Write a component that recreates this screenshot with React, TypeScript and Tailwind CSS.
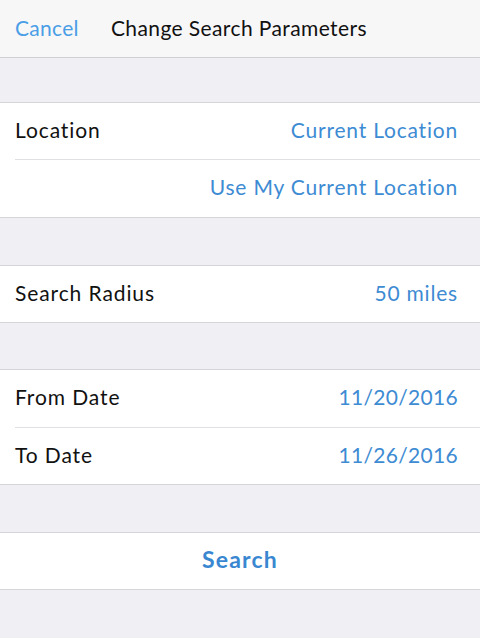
import React from 'react';

const font = { fontFamily: 'Lato, "Open Sans", sans-serif' };

interface RowProps {
  label?: string;
  value: string;
  h?: string;
  numeric?: boolean;
}

const Row = ({ label, value, h = 'h-[56px]', numeric }: RowProps) => (
  <div className={`flex items-center justify-between pl-[15px] pr-[22px] pb-[3px] ${h}`}>
    <span className="text-[21px] tracking-[0.9px] text-[#111]">{label}</span>
    <span className={`text-[21px] text-[#3d8bd3] ${numeric ? 'tracking-[0.3px]' : 'tracking-[0.8px]'}`}>{value}</span>
  </div>
);

const Sep = () => (
  <div className="pl-[15px]">
    <div className="h-px bg-[#e0e0e4]" />
  </div>
);

const Section = ({ children }: { children: React.ReactNode }) => (
  <div className="bg-white border-y border-[#d6d6da]">{children}</div>
);

export default function App() {
  return (
    <div className="w-[480px] h-[638px] bg-[#efeff4] overflow-hidden" style={font}>
      <div className="h-[58px] bg-[#f7f7f8] border-b border-[#cfcfd3] flex items-center px-[15px] pb-[2px]">
        <span className="text-[21px] tracking-[0.3px] text-[#4a9ee6]">Cancel</span>
        <span className="ml-[32px] text-[21px] tracking-[0.4px] text-[#111]">Change Search Parameters</span>
      </div>

      <div className="h-[44px]" />
      <Section>
        <Row label="Location" value="Current Location" />
        <Sep />
        <Row value="Use My Current Location" h="h-[57px]" />
      </Section>

      <div className="h-[47px]" />
      <Section>
        <Row label="Search Radius" value="50 miles" />
      </Section>

      <div className="h-[46px]" />
      <Section>
        <Row label="From Date" value="11/20/2016" h="h-[57px]" numeric />
        <Sep />
        <Row label="To Date" value="11/26/2016" numeric />
      </Section>

      <div className="h-[47px]" />
      <Section>
        <div className="h-[56px] flex items-center justify-center pb-[3px]">
          <span className="text-[23px] font-bold tracking-[1.2px] text-[#3a87d1]">Search</span>
        </div>
      </Section>
    </div>
  );
}
